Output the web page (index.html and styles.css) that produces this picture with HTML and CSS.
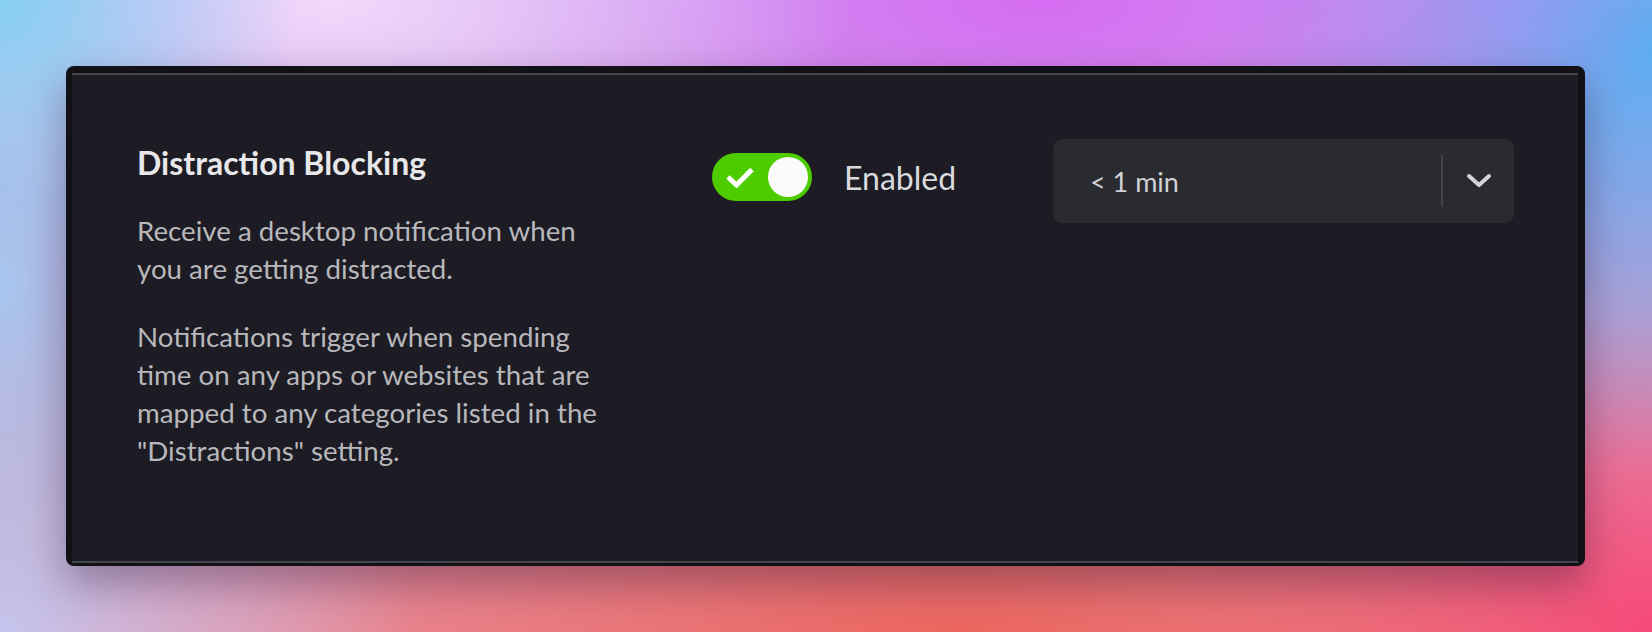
FILE: index.html
```html
<!DOCTYPE html>
<html lang="en">
<head>
  <meta charset="UTF-8">
  <title>Distraction Blocking</title>
  <link rel="stylesheet" href="styles.css">
</head>
<body>
  <div class="window">
    <div class="panel">
      <div class="setting">
        <div class="setting-info">
          <h2 class="setting-title">Distraction Blocking</h2>
          <p>Receive a desktop notification when you are getting distracted.</p>
          <p>Notifications trigger when spending time on any apps or websites that are mapped to any categories listed in the "Distractions" setting.</p>
        </div>

        <div class="setting-toggle">
          <button class="switch">
            <svg class="check" width="30" height="22" viewBox="0 0 30 22">
              <polyline points="3,11 11.5,19 27,3.5" fill="none" stroke="#fff" stroke-width="5"/>
            </svg>
            <span class="knob"></span>
          </button>
          <span class="switch-label">Enabled</span>
        </div>

        <div class="select">
          <span class="select-value">&lt; 1 min</span>
          <span class="select-arrow">
            <svg width="26" height="18" viewBox="0 0 26 18">
              <polyline points="3,4 13,13 23,4" fill="none" stroke="#d4d4d8" stroke-width="4" stroke-linecap="round" stroke-linejoin="round"/>
            </svg>
          </span>
        </div>
      </div>
    </div>
  </div>
</body>
</html>
```

FILE: styles.css
```css
html, body {
  height: 100%;
}
body {
  margin: 0;
  padding: 66px 67px 66px 66px;
  box-sizing: border-box;
  font-family: Lato, "Noto Sans", sans-serif;
  background:
    radial-gradient(ellipse 300px 260px at 0% 0%, #86d0f2, rgba(134, 208, 242, 0)),
    radial-gradient(ellipse 520px 240px at 20% 0%, #f3d8fb, rgba(243, 216, 251, 0)),
    radial-gradient(ellipse 620px 260px at 63% 0%, #d66cf2, rgba(214, 108, 242, 0)),
    radial-gradient(ellipse 460px 420px at 100% 8%, #5eacf0, rgba(94, 172, 240, 0)),
    radial-gradient(ellipse 260px 380px at 0% 45%, #a6c6ee, rgba(166, 198, 238, 0)),
    radial-gradient(ellipse 420px 320px at 0% 100%, #c8c4ee, rgba(200, 196, 238, 0)),
    radial-gradient(ellipse 720px 280px at 58% 100%, #ec6660, rgba(236, 102, 96, 0)),
    radial-gradient(ellipse 520px 320px at 100% 100%, #f6487a, rgba(246, 72, 122, 0)),
    linear-gradient(to bottom, #c6a4f0, #e88a98);
}
.window {
  height: 500px;
  box-sizing: border-box;
  padding: 7px 7px 3px 6px;
  background: #111116;
  border-radius: 8px;
  box-shadow: 0 18px 40px rgba(30, 10, 40, 0.35);
}
.panel {
  height: 100%;
  box-sizing: border-box;
  padding: 64px 64px 0 65px;
  background: #1d1c24;
  border-top: 2px solid #45454e;
  border-bottom: 2px solid #45454e;
}
.setting {
  display: flex;
  align-items: flex-start;
}
.setting-info {
  flex: none;
  width: 575px;
}
.setting-title {
  margin: 5px 0 0;
  font-size: 32px;
  font-weight: 700;
  line-height: 1.2;
  color: #e8e8ea;
}
.setting-info p {
  max-width: 475px;
  margin: 30px 0 0;
  font-size: 27.7px;
  line-height: 38px;
  color: #b8b8bc;
}
.setting-info p + p {
  margin-top: 30px;
}
.setting-toggle {
  flex: none;
  width: 341px;
  margin-top: 14px;
  display: flex;
  align-items: center;
  gap: 32px;
}
.switch {
  width: 100px;
  height: 48px;
  padding: 0 4px 0 13px;
  border: none;
  border-radius: 24px;
  background: #4dcc00;
  display: flex;
  align-items: center;
  justify-content: space-between;
  cursor: pointer;
}
.check {
  display: block;
}
.knob {
  width: 40px;
  height: 40px;
  border-radius: 50%;
  background: #fafafa;
}
.switch-label {
  font-size: 32px;
  color: #dadadd;
}
.select {
  flex: 1;
  height: 84px;
  display: flex;
  align-items: center;
  background: #2a2a31;
  border-radius: 9px;
}
.select-value {
  flex: 1;
  padding-left: 37px;
  font-size: 27px;
  color: #d2d2d6;
}
.select-arrow {
  width: 71px;
  height: 52px;
  border-left: 2px solid #43434b;
  display: flex;
  align-items: center;
  justify-content: center;
}
```
